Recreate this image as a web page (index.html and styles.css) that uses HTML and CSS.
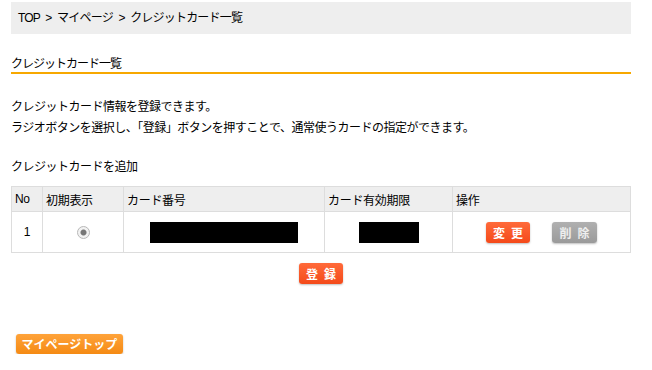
FILE: index.html
```html
<!DOCTYPE html>
<html>
<head>
  <meta charset="utf-8">
  <title>クレジットカード一覧</title>
  <link rel="stylesheet" href="styles.css">
</head>
<body>
  <div class="wrapper">
    <div class="breadcrumb">TOP &gt; マイページ &gt; クレジットカード一覧</div>

    <h2 class="title">クレジットカード一覧</h2>

    <p class="lead">
      クレジットカード情報を登録できます。<br>
      ラジオボタンを選択し、「登録」ボタンを押すことで、通常使うカードの指定ができます。
    </p>

    <p class="add">クレジットカードを追加</p>

    <table class="cards">
      <tr>
        <th class="col_no">No</th>
        <th class="col_default">初期表示</th>
        <th class="col_number">カード番号</th>
        <th class="col_expire">カード有効期限</th>
        <th class="col_action">操作</th>
      </tr>
      <tr>
        <td>1</td>
        <td><span class="radio checked"></span></td>
        <td><span class="mask mask_number"></span></td>
        <td><span class="mask mask_expire"></span></td>
        <td>
          <div class="actions">
            <button class="btn btn_red">変更</button>
            <button class="btn btn_gray">削除</button>
          </div>
        </td>
      </tr>
    </table>

    <div class="submit_row">
      <button class="btn btn_red">登録</button>
    </div>

    <button class="btn btn_orange">マイページトップ</button>
  </div>
</body>
</html>
```

FILE: styles.css
```css
body {
  margin: 0;
  font-family: "Liberation Sans", "Noto Sans CJK JP", sans-serif;
  font-size: 12px;
  color: #000;
  background: #fff;
}

.wrapper {
  width: 620px;
  padding: 2px 0 0 11px;
}

.breadcrumb {
  background-color: #eeeeee;
  height: 32px;
  line-height: 32px;
  padding-left: 7px;
  letter-spacing: -0.8px;
  word-spacing: 3px;
}

.title {
  font-size: 12px;
  font-weight: normal;
  line-height: 16px;
  padding-top: 2px;
  margin: 20px 0 0;
  letter-spacing: -1px;
  border-bottom: 2px solid #f7a800;
}

.lead {
  margin: 23px 0 0;
  line-height: 21px;
  letter-spacing: -0.5px;
}

.add {
  margin: 18px 0 0;
  line-height: 21px;
  letter-spacing: -0.5px;
}

.cards {
  margin-top: 8px;
  width: 620px;
  border-collapse: collapse;
}

.cards th,
.cards td {
  border: 1px solid #dddddd;
}

.cards th {
  background-color: #eeeeee;
  font-weight: normal;
  text-align: left;
  height: 24px;
  padding: 0 0 0 3px;
  letter-spacing: -0.3px;
}

.cards td {
  height: 40px;
  padding: 0;
  text-align: center;
}

.col_no { width: 27px; }
.col_default { width: 77px; }
.col_number { width: 197px; }
.col_expire { width: 124px; }

.radio {
  display: inline-block;
  width: 11px;
  height: 11px;
  border-radius: 50%;
  border: 1px solid #b8b8b8;
  background: radial-gradient(circle, #777 0, #777 2.5px, #f2f2f2 3.5px);
  vertical-align: middle;
}

.mask {
  display: inline-block;
  background: #000;
  height: 21px;
  vertical-align: middle;
}

.mask_number { width: 148px; }
.mask_expire { width: 60px; }

.actions {
  display: flex;
  justify-content: center;
  gap: 22px;
}

.btn {
  font-family: "Noto Sans CJK JP", sans-serif;
  font-size: 12px;
  font-weight: bold;
  color: #fff;
  border: none;
  border-radius: 3px;
  padding: 0;
  height: 21px;
  line-height: 21px;
  cursor: pointer;
  box-shadow: 0 1px 2px rgba(0, 0, 0, 0.25);
}

.btn_red {
  width: 44px;
  letter-spacing: 6px;
  text-indent: 6px;
  background: linear-gradient(#ff6a3a, #f44a1a);
}

.btn_gray {
  width: 45px;
  letter-spacing: 6px;
  text-indent: 6px;
  background: linear-gradient(#b0b0b0, #9a9a9a);
  color: #eee;
}

.submit_row {
  text-align: center;
  margin-top: 10px;
}

.btn_orange {
  margin: 50px 0 0 5px;
  width: 107px;
  height: 20px;
  line-height: 20px;
  background: linear-gradient(#ffa33a, #f58a14);
}
```
